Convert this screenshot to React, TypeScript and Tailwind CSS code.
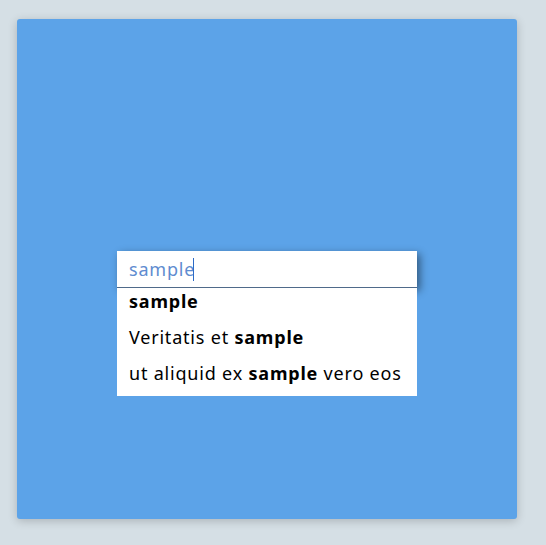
import { useState } from "react";

const items = [
  { pre: "", hit: "sample", post: "" },
  { pre: "Veritatis et ", hit: "sample", post: "" },
  { pre: "ut aliquid ex ", hit: "sample", post: " vero eos" },
];

export default function App() {
  const [value, setValue] = useState("sample");

  return (
    <div className="min-h-screen bg-[#d5dfe5] pl-[17px] pt-[19px] font-['Noto_Sans','Noto_Sans_CJK_KR',sans-serif] tracking-[0.8px]">
      <div className="flex h-[500px] w-[500px] flex-col items-center rounded-[3px] bg-[#5ca3e8] pt-[232px] shadow-[0_2px_10px_rgba(0,0,0,0.2)]">
        <div className="w-[300px]">
          <div className="relative shadow-[3px_3px_8px_rgba(0,0,0,0.45)]">
            <input
              value={value}
              onChange={(e) => setValue(e.target.value)}
              className="block h-[37px] w-full border-b border-[#4f6a8a] bg-white px-[12px] text-[18px] tracking-[0.8px] text-[#5e8cd0] caret-transparent outline-none"
            />
            <div className="pointer-events-none absolute inset-y-0 left-[12px] flex items-center text-[18px] text-transparent">
              <span className="whitespace-pre">{value}</span>
              <span className="-ml-[2px] h-[23px] w-px bg-[#2e6bc6]" />
            </div>
          </div>
          <ul className="relative bg-white">
            {items.map((it, i) => (
              <li
                key={i}
                className="flex h-[36px] items-center px-[12px] pb-[10px] text-[18px] leading-none text-black"
              >
                <span className="whitespace-pre">
                  {it.pre}
                  <b className="font-bold">{it.hit}</b>
                  {it.post}
                </span>
              </li>
            ))}
          </ul>
        </div>
      </div>
    </div>
  );
}
